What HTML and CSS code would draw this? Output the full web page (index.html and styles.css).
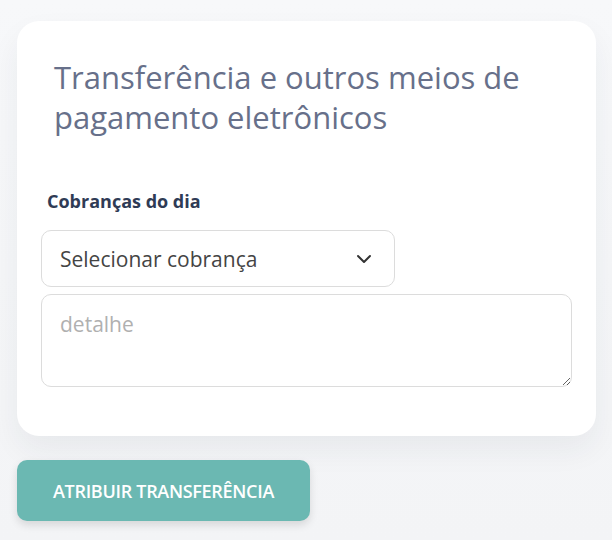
FILE: index.html
```html
<!DOCTYPE html>
<html>
<head>
    <title>Transferência</title>
    <link rel="stylesheet" href="styles.css">
</head>
<body>
<div class="card">
    <h2 class="card-title">Transferência e outros meios de pagamento eletrônicos</h2>

    <label class="field-label" for="cobranca">Cobranças do dia</label>
    <div class="select-wrap">
        <select id="cobranca" class="select">
            <option>Selecionar cobrança</option>
        </select>
        <svg class="chevron" width="16" height="10" viewBox="0 0 16 10">
            <path d="M2 2 L8 8 L14 2" fill="none" stroke="#333" stroke-width="2" stroke-linecap="round" stroke-linejoin="round"/>
        </svg>
    </div>
    <textarea class="detail" placeholder="detalhe"></textarea>
</div>

<button class="btn-assign">Atribuir transferência</button>
</body>
</html>
```

FILE: styles.css
```css
body {
    margin: 0;
    padding: 21px 16px 0 17px;
    min-height: 540px;
    box-sizing: border-box;
    font-family: "Open Sans", "Noto Sans", sans-serif;
    background: linear-gradient(#f7f8fa, #f3f4f6);
}
.card {
    background: #fff;
    border-radius: 22px;
    padding: 36px 24px 49px 24px;
    box-shadow: 0 14px 30px rgba(40, 50, 70, 0.06);
    display: flex;
    flex-direction: column;
    align-items: flex-start;
}
.card-title {
    margin: 0 0 52px 13px;
    font-size: 31px;
    font-weight: 500;
    line-height: 40px;
    color: #67708a;
}
.field-label {
    margin: 0 0 17px 6px;
    font-size: 18px;
    font-weight: 700;
    color: #2f3b55;
}
.select-wrap {
    position: relative;
    margin-bottom: 7px;
}
.select {
    appearance: none;
    width: 354px;
    height: 57px;
    padding: 0 18px;
    border: 1px solid #dcdcdc;
    border-radius: 10px;
    background: #fff;
    font-family: inherit;
    font-size: 21px;
    color: #444;
}
.chevron {
    position: absolute;
    right: 23px;
    top: 24px;
    pointer-events: none;
}
.detail {
    width: 531px;
    height: 93px;
    box-sizing: border-box;
    padding: 15px 18px;
    border: 1px solid #dcdcdc;
    border-radius: 10px;
    font-family: inherit;
    font-size: 21px;
    color: #444;
}
.detail::placeholder {
    color: #b0b0b0;
}
.btn-assign {
    margin-top: 24px;
    width: 293px;
    height: 61px;
    border: none;
    border-radius: 10px;
    background: #6bb8b2;
    color: #fff;
    font-family: inherit;
    font-size: 18px;
    font-weight: 600;
    letter-spacing: -0.3px;
    text-transform: uppercase;
    box-shadow: 0 4px 8px rgba(0, 0, 0, 0.12);
}
```
